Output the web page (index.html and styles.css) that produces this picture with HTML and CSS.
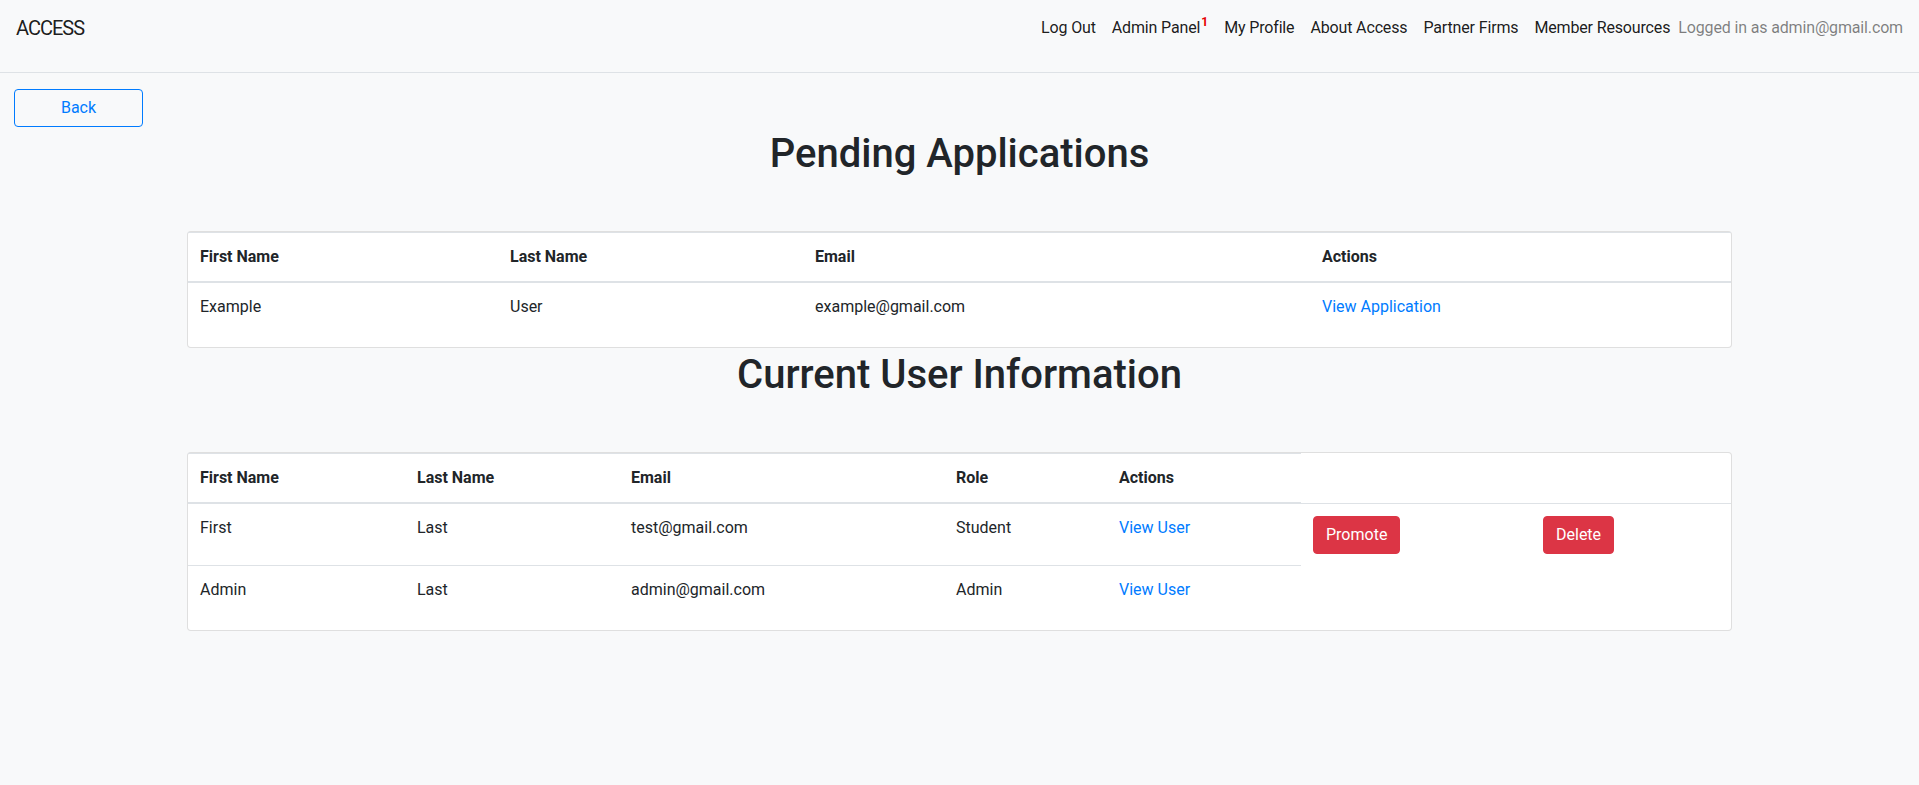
FILE: index.html
```html
<!DOCTYPE html>
<html lang="en">
<head>
<meta charset="utf-8">
<title>ACCESS - Admin Panel</title>
<link rel="stylesheet" href="styles.css">
</head>
<body>
<nav class="navbar">
  <a class="brand" href="#">ACCESS</a>
  <ul class="nav-links">
    <li><a class="nav-link" href="#">Log Out</a></li>
    <li><a class="nav-link" href="#">Admin Panel<sup class="badge">1</sup></a></li>
    <li><a class="nav-link" href="#">My Profile</a></li>
    <li><a class="nav-link" href="#">About Access</a></li>
    <li><a class="nav-link" href="#">Partner Firms</a></li>
    <li><a class="nav-link" href="#">Member Resources</a></li>
  </ul>
  <span class="navbar-text">Logged in as admin@gmail.com</span>
</nav>

<main class="page">
  <button class="btn-back" type="button">Back</button>

  <h1 class="page-title">Pending Applications</h1>
  <div class="card">
    <table class="table">
      <colgroup>
        <col class="c-p1"><col class="c-p2"><col class="c-p3"><col class="c-p4">
      </colgroup>
      <thead>
        <tr><th>First Name</th><th>Last Name</th><th>Email</th><th>Actions</th></tr>
      </thead>
      <tbody>
        <tr><td>Example</td><td>User</td><td>example@gmail.com</td><td><a class="link" href="#">View Application</a></td></tr>
      </tbody>
    </table>
  </div>

  <h1 class="page-title">Current User Information</h1>
  <div class="card">
    <table class="table">
      <colgroup>
        <col class="c-u1"><col class="c-u2"><col class="c-u3"><col class="c-u4"><col class="c-u5"><col class="c-u6"><col class="c-u7">
      </colgroup>
      <thead>
        <tr><th>First Name</th><th>Last Name</th><th>Email</th><th>Role</th><th>Actions</th></tr>
      </thead>
      <tbody>
        <tr>
          <td>First</td><td>Last</td><td>test@gmail.com</td><td>Student</td><td><a class="link" href="#">View User</a></td>
          <td><button class="btn-danger" type="button">Promote</button></td>
          <td><button class="btn-danger" type="button">Delete</button></td>
        </tr>
        <tr>
          <td>Admin</td><td>Last</td><td>admin@gmail.com</td><td>Admin</td><td><a class="link" href="#">View User</a></td>
        </tr>
      </tbody>
    </table>
  </div>
</main>
</body>
</html>
```

FILE: styles.css
```css
*, *::before, *::after { box-sizing: border-box; }

html, body { margin: 0; padding: 0; }

body {
  font-family: "Segoe UI", Roboto, "Liberation Sans", sans-serif;
  font-size: 16px;
  line-height: 1.5;
  color: #212529;
  background: #f8f9fa;
}

/* Navbar */
.navbar {
  display: flex;
  align-items: flex-start;
  padding: 8px 16px 24px;
  border-bottom: 1px solid #dee2e6;
  background: #f8f9fa;
}

.brand {
  font-size: 20px;
  line-height: 30px;
  padding: 5px 0;
  letter-spacing: -1px;
  color: rgba(0, 0, 0, 0.9);
  text-decoration: none;
}

.nav-links {
  display: flex;
  list-style: none;
  margin: 0 0 0 auto;
  padding: 0;
}

.nav-link {
  display: block;
  padding: 8px;
  line-height: 24px;
  letter-spacing: -0.15px;
  color: rgba(0, 0, 0, 0.9);
  text-decoration: none;
}

.badge {
  position: relative;
  top: -0.6em;
  vertical-align: baseline;
  line-height: 0;
  font-size: 12px;
  font-weight: 700;
  letter-spacing: 0;
  color: #e60000;
  margin-left: 1px;
}

.navbar-text {
  padding: 8px 0;
  line-height: 24px;
  letter-spacing: -0.15px;
  color: rgba(0, 0, 0, 0.5);
}

/* Page */
.page { padding-bottom: 40px; }

.btn-back {
  display: block;
  width: 129px;
  margin: 16px 0 0 14px;
  padding: 6px 12px;
  border: 1px solid #007bff;
  border-radius: 4px;
  background: transparent;
  color: #007bff;
  font: inherit;
  line-height: 24px;
  text-align: center;
}

.page-title {
  font-size: 40px;
  font-weight: 500;
  line-height: 1.2;
  text-align: center;
  margin: 3px 0 53px;
  color: #212529;
}

.card {
  max-width: 1545px;
  margin: 0 auto;
  background: #fff;
  border: 1px solid rgba(0, 0, 0, 0.125);
  border-radius: 4px;
}

.table {
  width: 100%;
  table-layout: fixed;
  border-collapse: collapse;
  margin-bottom: 16px;
  color: #212529;
}

.table th,
.table td {
  padding: 12px;
  border-top: 1px solid #dee2e6;
  vertical-align: top;
  text-align: left;
}

.table th {
  font-weight: 700;
}

.table thead th {
  vertical-align: bottom;
  border-bottom: 2px solid #dee2e6;
}

.link {
  color: #007bff;
  text-decoration: none;
}

.btn-danger {
  display: inline-block;
  padding: 6px 12px;
  border: 1px solid #dc3545;
  border-radius: 4px;
  background: #dc3545;
  color: #fff;
  font: inherit;
  line-height: 24px;
}

/* column widths */
.c-p1 { width: 310px; }
.c-p2 { width: 305px; }
.c-p3 { width: 507px; }
.c-p4 { width: 421px; }

.c-u1 { width: 217px; }
.c-u2 { width: 214px; }
.c-u3 { width: 325px; }
.c-u4 { width: 163px; }
.c-u5 { width: 194px; }
.c-u6 { width: 230px; }
.c-u7 { width: 200px; }
```
